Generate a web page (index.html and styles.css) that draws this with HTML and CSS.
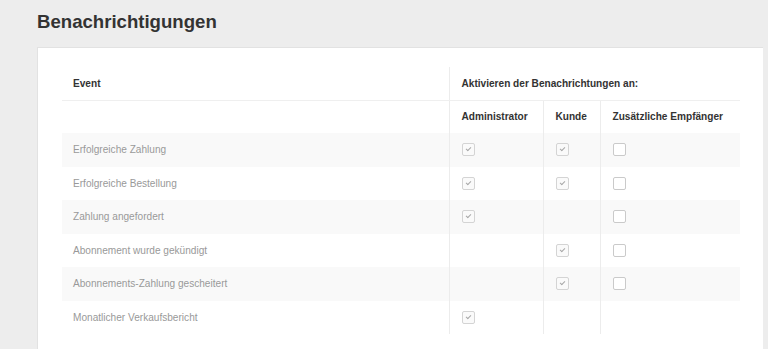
FILE: index.html
```html
<!DOCTYPE html>
<html lang="de">
<head>
    <meta charset="UTF-8">
    <title>Benachrichtigungen</title>
    <link rel="stylesheet" href="styles.css">
</head>
<body>
    <div class="page">
        <h1 class="page-title">Benachrichtigungen</h1>
        <div class="card">
            <table class="notify-table">
                <colgroup>
                    <col class="col-event">
                    <col class="col-admin">
                    <col class="col-customer">
                    <col class="col-extra">
                </colgroup>
                <thead>
                    <tr>
                        <th>Event</th>
                        <th class="sep" colspan="3">Aktivieren der Benachrichtungen an:</th>
                    </tr>
                    <tr>
                        <th></th>
                        <th class="sep">Administrator</th>
                        <th class="sep">Kunde</th>
                        <th class="sep">Zusätzliche Empfänger</th>
                    </tr>
                </thead>
                <tbody>
                    <tr>
                        <td>Erfolgreiche Zahlung</td>
                        <td class="sep"><span class="check checked"></span></td>
                        <td class="sep"><span class="check checked"></span></td>
                        <td class="sep"><span class="check"></span></td>
                    </tr>
                    <tr>
                        <td>Erfolgreiche Bestellung</td>
                        <td class="sep"><span class="check checked"></span></td>
                        <td class="sep"><span class="check checked"></span></td>
                        <td class="sep"><span class="check"></span></td>
                    </tr>
                    <tr>
                        <td>Zahlung angefordert</td>
                        <td class="sep"><span class="check checked"></span></td>
                        <td class="sep"></td>
                        <td class="sep"><span class="check"></span></td>
                    </tr>
                    <tr>
                        <td>Abonnement wurde gekündigt</td>
                        <td class="sep"></td>
                        <td class="sep"><span class="check checked"></span></td>
                        <td class="sep"><span class="check"></span></td>
                    </tr>
                    <tr>
                        <td>Abonnements-Zahlung gescheitert</td>
                        <td class="sep"></td>
                        <td class="sep"><span class="check checked"></span></td>
                        <td class="sep"><span class="check"></span></td>
                    </tr>
                    <tr>
                        <td>Monatlicher Verkaufsbericht</td>
                        <td class="sep"><span class="check checked"></span></td>
                        <td class="sep"></td>
                        <td class="sep"></td>
                    </tr>
                </tbody>
            </table>
        </div>
    </div>
</body>
</html>
```

FILE: styles.css
```css
body {
    margin: 0;
    background-color: #ededed;
    font-family: "Liberation Sans", Arial, sans-serif;
    color: #333;
}

.page {
    padding: 0 5px 0 37px;
}

.page-title {
    margin: 0;
    padding-top: 10px;
    height: 47px;
    box-sizing: border-box;
    font-size: 18.6px;
    font-weight: bold;
    color: #333;
    line-height: 24px;
}

.card {
    background-color: #fff;
    border: 1px solid #e2e2e2;
    border-right: 0;
    padding: 19px 22px 40px 24px;
}

.notify-table {
    width: 678px;
    table-layout: fixed;
    border-collapse: collapse;
    font-size: 10.1px;
}

.col-event {
    width: 387px;
}

.col-admin {
    width: 94px;
}

.col-customer {
    width: 57px;
}

.col-extra {
    width: 140px;
}

.notify-table th,
.notify-table td {
    text-align: left;
    padding: 0 11px;
    white-space: nowrap;
}

.notify-table th {
    height: 32.5px;
    font-weight: bold;
    color: #333;
}

.notify-table td {
    height: 33.5px;
    color: #999;
}

.notify-table thead tr:first-child th {
    border-bottom: 1px solid #efefef;
}

.notify-table tbody tr:nth-child(odd) td {
    background-color: #f9f9f9;
}

.notify-table .sep {
    border-left: 1px solid #ececec;
    padding-left: 12px;
}

.check {
    display: block;
    width: 11px;
    height: 11px;
    border: 1px solid #cacaca;
    border-radius: 2px;
    background-color: #fff;
    position: relative;
}

.check.checked {
    border-color: #d4d4d4;
    background-color: #fafafa;
}

.check.checked::after {
    content: "";
    position: absolute;
    left: 3px;
    top: 3px;
    width: 4px;
    height: 2px;
    border-left: 1px solid #a8a8a8;
    border-bottom: 1px solid #a8a8a8;
    transform: rotate(-45deg);
}
```
